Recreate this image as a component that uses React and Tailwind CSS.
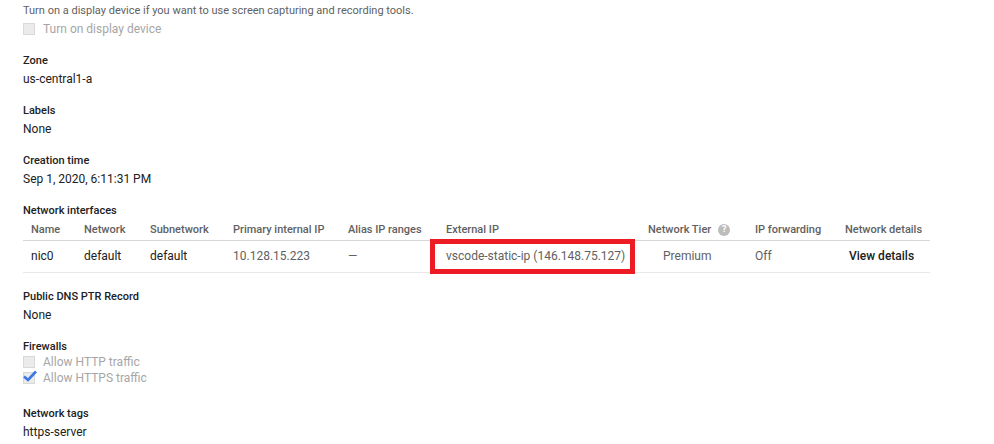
import React from "react";

const columns = [
  { title: "Name", value: "nic0", width: "w-[53px]", cell: "text-[#212121]" },
  { title: "Network", value: "default", width: "w-[66px]", cell: "text-[#212121]" },
  { title: "Subnetwork", value: "default", width: "w-[83px]", cell: "text-[#212121]" },
  { title: "Primary internal IP", value: "10.128.15.223", width: "w-[115px]", cell: "text-[#616161]" },
  { title: "Alias IP ranges", value: "—", width: "w-[98px]", cell: "text-[#616161]" },
];

const Field = ({ label, value, className = "" }) => (
  <div className={className}>
    <div className="h-[19px] text-[11px] leading-[19px] font-medium text-[#212121]">{label}</div>
    <div className="h-[19px] leading-[19px] text-[#212121]">{value}</div>
  </div>
);

const Check = ({ label, checked = false }) => (
  <div className="flex h-4 items-center gap-[8px] text-[#a6a6a6]">
    <div className="relative h-3 w-3 border border-[#d9d9d9] bg-[#ebebeb]">
      {checked && (
        <svg viewBox="0 0 14 12" className="absolute -top-[3px] -left-[1px] h-[12px] w-[14px]">
          <path d="M1 6.5 L5 10 L13 1.5" fill="none" stroke="#3b78e7" strokeWidth="2.6" />
        </svg>
      )}
    </div>
    <span>{label}</span>
  </div>
);

const App = () => {
  return (
    <div className="relative h-[444px] w-[994px] overflow-hidden bg-white pl-[23px] font-['Roboto',sans-serif] text-[12px]">
      <div className="h-[19px] pt-[1px] text-[11px] leading-[19px] text-[#616161]">
        Turn on a display device if you want to use screen capturing and recording tools.
      </div>
      <div className="mt-[2px]">
        <Check label="Turn on display device" />
      </div>

      <Field label="Zone" value="us-central1-a" className="mt-[14px]" />
      <Field label="Labels" value="None" className="mt-[12px]" />
      <Field label="Creation time" value="Sep 1, 2020, 6:11:31 PM" className="mt-[12px]" />

      <div className="mt-[12px] h-[19px] text-[11px] leading-[19px] font-medium text-[#212121]">Network interfaces</div>

      {/* Network interfaces table */}
      <div className="w-[907px]">
        <div className="flex h-[21px] items-center border-b border-[#d6d6d6] pl-[8px] text-[11px] font-medium text-[#616161]">
          {columns.map((col) => (
            <div key={col.title} className={col.width}>{col.title}</div>
          ))}
          <div className="w-[202px]">External IP</div>
          <div className="flex w-[107px] items-center gap-[7px]">
            Network Tier
            <span className="flex h-3 w-3 items-center justify-center rounded-full bg-[#bdbdbd] text-[9px] font-bold text-white">?</span>
          </div>
          <div className="w-[90px]">IP forwarding</div>
          <div>Network details</div>
        </div>
        <div className="flex h-[32px] items-center border-b border-[#e8e8e8] pb-[2px] pl-[8px]">
          {columns.map((col) => (
            <div key={col.title} className={`${col.width} ${col.cell}`}>{col.value}</div>
          ))}
          <div className="w-[202px] text-[#616161]">vscode-static-ip (146.148.75.127)</div>
          <div className="w-[107px] pl-[15px] text-[#616161]">Premium</div>
          <div className="w-[94px] text-[#616161]">Off</div>
          <div className="font-medium text-[#212121]">View details</div>
        </div>
      </div>

      <Field label="Public DNS PTR Record" value="None" className="mt-[14px]" />

      <div className="mt-[12px] h-[19px] text-[11px] leading-[19px] font-medium text-[#212121]">Firewalls</div>
      <div className="-mt-[2px]">
        <Check label="Allow HTTP traffic" />
      </div>
      <Check label="Allow HTTPS traffic" checked />

      <Field label="Network tags" value="https-server" className="mt-[18px]" />

      {/* red highlight around the external IP */}
      <div className="absolute left-[430px] top-[239px] h-[35px] w-[205px] border-[5px] border-[#ed1c24]" />
    </div>
  );
};

export default App;
